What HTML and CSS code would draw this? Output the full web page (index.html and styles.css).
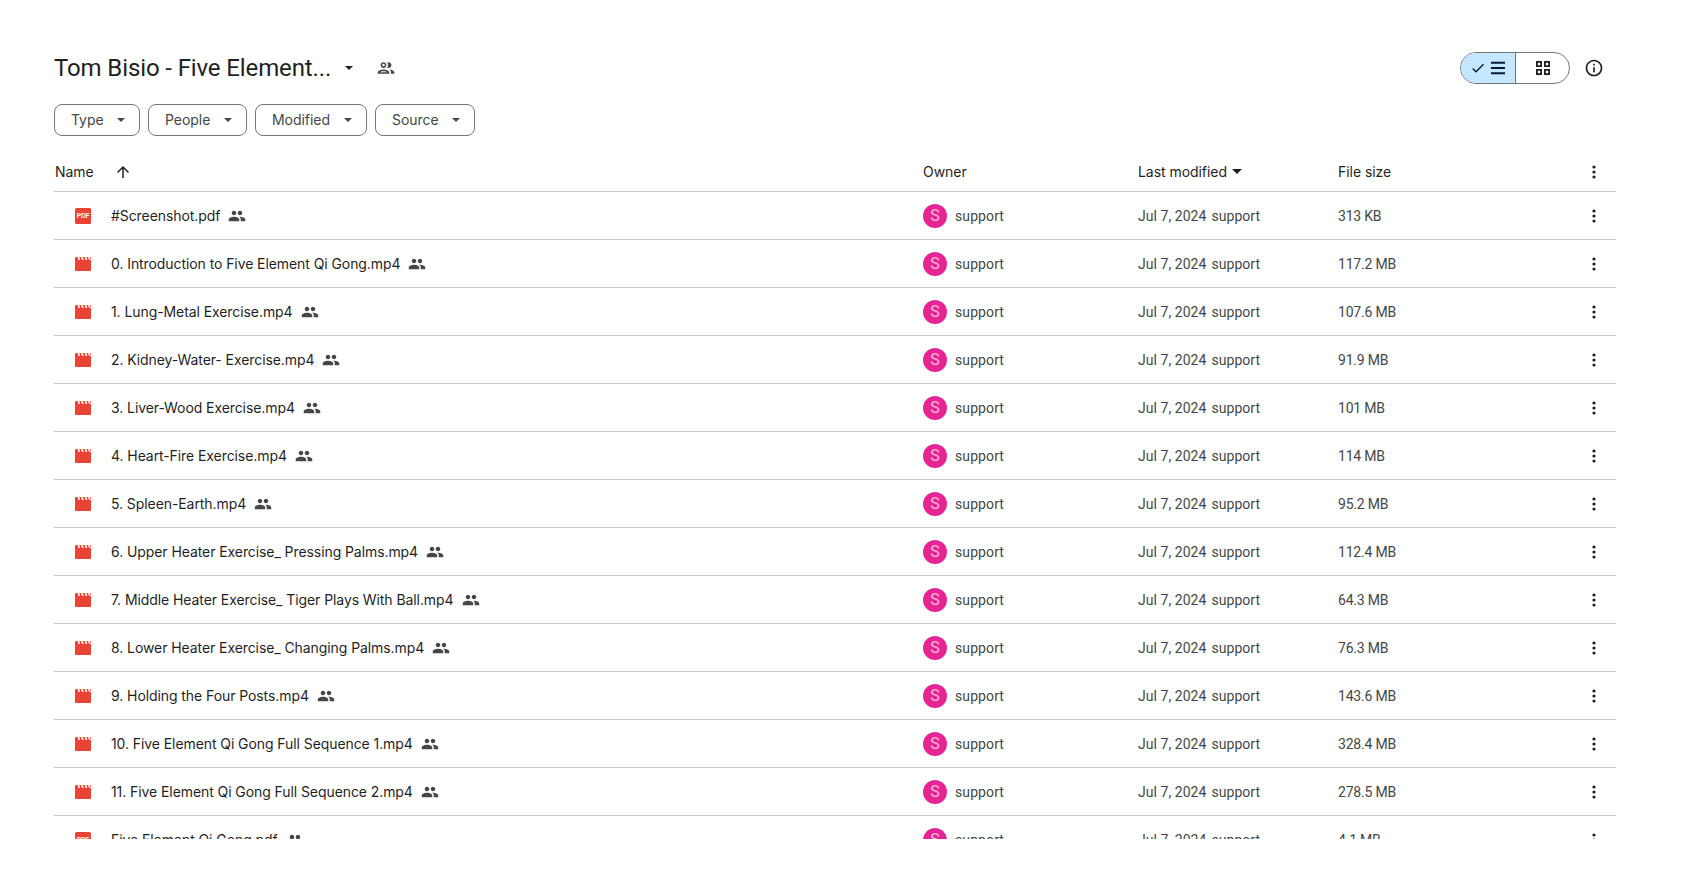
FILE: index.html
```html
<!DOCTYPE html>
<html lang="en">
<head>
<meta charset="utf-8">
<title>Tom Bisio - Five Element Qi Gong</title>
<link rel="stylesheet" href="styles.css">
</head>
<body>
<svg class="defs" width="0" height="0" aria-hidden="true">
  <symbol id="i-people" viewBox="0 0 24 24"><path d="M16 11c1.66 0 2.99-1.34 2.99-3S17.66 5 16 5c-1.66 0-3 1.34-3 3s1.34 3 3 3zm-8 0c1.66 0 2.99-1.34 2.99-3S9.66 5 8 5C6.34 5 5 6.34 5 8s1.34 3 3 3zm0 2c-2.33 0-7 1.17-7 3.5V19h14v-2.5c0-2.33-4.67-3.5-7-3.5zm8 0c-.29 0-.62.02-.97.05 1.16.84 1.97 1.97 1.97 3.45V19h6v-2.5c0-2.33-4.67-3.5-7-3.5z"/></symbol>
  <symbol id="i-more" viewBox="0 0 16 16"><circle cx="8" cy="3" r="1.600"/><circle cx="8" cy="8" r="1.600"/><circle cx="8" cy="13" r="1.600"/></symbol>
  <symbol id="i-video" viewBox="0 0 16 16"><path fill-rule="evenodd" d="M1 1h14a1 1 0 0 1 1 1V14a1 1 0 0 1-1 1H1a1 1 0 0 1-1-1V2a1 1 0 0 1 1-1zM2.400 1l1.100 3h1.700L4.100 1zM6 1l1.100 3h1.700L7.700 1zM9.600 1l1.100 3h1.700l-1.100-3zM13 1l1.100 3h1.700L14.700 1z"/></symbol>
  <symbol id="i-caret" viewBox="0 0 10 5"><path d="M0 0h10L5 5z"/></symbol>
</svg>
<main class="page">
  <header class="top">
    <div class="crumb">
      <h1 class="title">Tom Bisio - Five Element...</h1>
      <svg class="title-caret"><use href="#i-caret"/></svg>
      <svg class="title-people" viewBox="0 0 24 24"><path d="M9 13.750c-2.340 0-7 1.170-7 3.500V19h14v-1.750c0-2.330-4.660-3.500-7-3.500zM4.340 17c.84-.58 2.870-1.250 4.660-1.250s3.820.67 4.660 1.250H4.340zM9 12c1.930 0 3.500-1.570 3.500-3.500S10.930 5 9 5 5.500 6.570 5.500 8.500 7.070 12 9 12zm0-5c.83 0 1.500.67 1.500 1.500S9.830 10 9 10s-1.500-.67-1.500-1.500S8.170 7 9 7zm7.040 6.810c1.160.84 1.960 1.960 1.960 3.440V19h4v-1.750c0-2.020-3.500-3.170-5.960-3.440zM15 12c1.930 0 3.500-1.570 3.500-3.500S16.930 5 15 5c-.54 0-1.040.13-1.500.35.63.89 1 1.980 1 3.150s-.37 2.260-1 3.150c.46.22.96.35 1.500.35z"/></svg>
    </div>
    <div class="view-tools">
      <div class="toggle">
        <span class="seg seg-on">
          <svg class="seg-check" viewBox="0 0 24 24"><path d="M9 16.170 4.830 12l-1.420 1.410L9 19 21 7l-1.410-1.410z"/></svg>
          <svg class="seg-icon" viewBox="0 0 18 18"><path d="M2 2.800h14v2H2zM2 8h14v2H2zM2 13.200h14v2H2z"/></svg>
        </span>
        <span class="seg">
          <svg class="seg-icon" viewBox="0 0 18 18"><path d="M2 2h6v6H2zM3.800 3.800v2.400h2.400V3.800zM10 2h6v6h-6zM11.800 3.800v2.400h2.400V3.800zM2 10h6v6H2zM3.800 11.800v2.400h2.400v-2.400zM10 10h6v6h-6zM11.800 11.800v2.400h2.400v-2.400z" fill-rule="evenodd"/></svg>
        </span>
      </div>
      <svg class="info" viewBox="0 0 24 24"><path d="M11 7h2v2h-2zm0 4h2v6h-2zm1-9C6.480 2 2 6.480 2 12s4.480 10 10 10 10-4.480 10-10S17.520 2 12 2zm0 18c-4.410 0-8-3.590-8-8s3.590-8 8-8 8 3.590 8 8-3.590 8-8 8z"/></svg>
    </div>
  </header>

  <div class="chips">
    <button class="chip">Type<svg class="chip-caret"><use href="#i-caret"/></svg></button>
    <button class="chip">People<svg class="chip-caret"><use href="#i-caret"/></svg></button>
    <button class="chip">Modified<svg class="chip-caret"><use href="#i-caret"/></svg></button>
    <button class="chip">Source<svg class="chip-caret"><use href="#i-caret"/></svg></button>
  </div>

  <div class="list-head row-grid">
    <div class="head-name">Name
      <svg class="arrow" viewBox="0 0 24 24"><path d="M4 12l1.410 1.410L11 7.830V20h2V7.830l5.580 5.590L20 12l-8-8z"/></svg>
    </div>
    <div>Owner</div>
    <div class="head-mod">Last modified<svg class="head-caret"><use href="#i-caret"/></svg></div>
    <div>File size</div>
    <svg class="more"><use href="#i-more"/></svg>
  </div>

  <div class="list">
    <div class="row row-grid"><div class="name"><svg class="ftype" viewBox="0 0 16 16"><rect width="16" height="16" rx="1.500"/><text x="8" y="10.300" class="pdf-label">PDF</text></svg><span>#Screenshot.pdf</span><svg class="shared"><use href="#i-people"/></svg></div><div class="owner"><span class="avatar">S</span>support</div><div class="mod"><span>Jul 7, 2024</span><span>support</span></div><div class="size">313 KB</div><svg class="more"><use href="#i-more"/></svg></div>
    <div class="row row-grid"><div class="name"><svg class="ftype"><use href="#i-video"/></svg><span>0. Introduction to Five Element Qi Gong.mp4</span><svg class="shared"><use href="#i-people"/></svg></div><div class="owner"><span class="avatar">S</span>support</div><div class="mod"><span>Jul 7, 2024</span><span>support</span></div><div class="size">117.2 MB</div><svg class="more"><use href="#i-more"/></svg></div>
    <div class="row row-grid"><div class="name"><svg class="ftype"><use href="#i-video"/></svg><span>1. Lung-Metal Exercise.mp4</span><svg class="shared"><use href="#i-people"/></svg></div><div class="owner"><span class="avatar">S</span>support</div><div class="mod"><span>Jul 7, 2024</span><span>support</span></div><div class="size">107.6 MB</div><svg class="more"><use href="#i-more"/></svg></div>
    <div class="row row-grid"><div class="name"><svg class="ftype"><use href="#i-video"/></svg><span>2. Kidney-Water- Exercise.mp4</span><svg class="shared"><use href="#i-people"/></svg></div><div class="owner"><span class="avatar">S</span>support</div><div class="mod"><span>Jul 7, 2024</span><span>support</span></div><div class="size">91.9 MB</div><svg class="more"><use href="#i-more"/></svg></div>
    <div class="row row-grid"><div class="name"><svg class="ftype"><use href="#i-video"/></svg><span>3. Liver-Wood Exercise.mp4</span><svg class="shared"><use href="#i-people"/></svg></div><div class="owner"><span class="avatar">S</span>support</div><div class="mod"><span>Jul 7, 2024</span><span>support</span></div><div class="size">101 MB</div><svg class="more"><use href="#i-more"/></svg></div>
    <div class="row row-grid"><div class="name"><svg class="ftype"><use href="#i-video"/></svg><span>4. Heart-Fire Exercise.mp4</span><svg class="shared"><use href="#i-people"/></svg></div><div class="owner"><span class="avatar">S</span>support</div><div class="mod"><span>Jul 7, 2024</span><span>support</span></div><div class="size">114 MB</div><svg class="more"><use href="#i-more"/></svg></div>
    <div class="row row-grid"><div class="name"><svg class="ftype"><use href="#i-video"/></svg><span>5. Spleen-Earth.mp4</span><svg class="shared"><use href="#i-people"/></svg></div><div class="owner"><span class="avatar">S</span>support</div><div class="mod"><span>Jul 7, 2024</span><span>support</span></div><div class="size">95.2 MB</div><svg class="more"><use href="#i-more"/></svg></div>
    <div class="row row-grid"><div class="name"><svg class="ftype"><use href="#i-video"/></svg><span>6. Upper Heater Exercise_ Pressing Palms.mp4</span><svg class="shared"><use href="#i-people"/></svg></div><div class="owner"><span class="avatar">S</span>support</div><div class="mod"><span>Jul 7, 2024</span><span>support</span></div><div class="size">112.4 MB</div><svg class="more"><use href="#i-more"/></svg></div>
    <div class="row row-grid"><div class="name"><svg class="ftype"><use href="#i-video"/></svg><span>7. Middle Heater Exercise_ Tiger Plays With Ball.mp4</span><svg class="shared"><use href="#i-people"/></svg></div><div class="owner"><span class="avatar">S</span>support</div><div class="mod"><span>Jul 7, 2024</span><span>support</span></div><div class="size">64.3 MB</div><svg class="more"><use href="#i-more"/></svg></div>
    <div class="row row-grid"><div class="name"><svg class="ftype"><use href="#i-video"/></svg><span>8. Lower Heater Exercise_ Changing Palms.mp4</span><svg class="shared"><use href="#i-people"/></svg></div><div class="owner"><span class="avatar">S</span>support</div><div class="mod"><span>Jul 7, 2024</span><span>support</span></div><div class="size">76.3 MB</div><svg class="more"><use href="#i-more"/></svg></div>
    <div class="row row-grid"><div class="name"><svg class="ftype"><use href="#i-video"/></svg><span>9. Holding the Four Posts.mp4</span><svg class="shared"><use href="#i-people"/></svg></div><div class="owner"><span class="avatar">S</span>support</div><div class="mod"><span>Jul 7, 2024</span><span>support</span></div><div class="size">143.6 MB</div><svg class="more"><use href="#i-more"/></svg></div>
    <div class="row row-grid"><div class="name"><svg class="ftype"><use href="#i-video"/></svg><span>10. Five Element Qi Gong Full Sequence 1.mp4</span><svg class="shared"><use href="#i-people"/></svg></div><div class="owner"><span class="avatar">S</span>support</div><div class="mod"><span>Jul 7, 2024</span><span>support</span></div><div class="size">328.4 MB</div><svg class="more"><use href="#i-more"/></svg></div>
    <div class="row row-grid"><div class="name"><svg class="ftype"><use href="#i-video"/></svg><span>11. Five Element Qi Gong Full Sequence 2.mp4</span><svg class="shared"><use href="#i-people"/></svg></div><div class="owner"><span class="avatar">S</span>support</div><div class="mod"><span>Jul 7, 2024</span><span>support</span></div><div class="size">278.5 MB</div><svg class="more"><use href="#i-more"/></svg></div>
    <div class="row row-grid"><div class="name"><svg class="ftype" viewBox="0 0 16 16"><rect width="16" height="16" rx="1.500"/><text x="8" y="10.300" class="pdf-label">PDF</text></svg><span>Five Element Qi Gong.pdf</span><svg class="shared"><use href="#i-people"/></svg></div><div class="owner"><span class="avatar">S</span>support</div><div class="mod"><span>Jul 7, 2024</span><span>support</span></div><div class="size">4.1 MB</div><svg class="more"><use href="#i-more"/></svg></div>
  </div>
</main>
</body>
</html>
```

FILE: styles.css
```css
* { box-sizing: border-box; }
html, body { margin: 0; background: #fff; }
body {
  height: 888px;
  overflow: hidden;
  font-family: Roboto, "Liberation Sans", sans-serif;
  font-size: 14px;
  color: #444746;
}
.defs { position: absolute; }
.page { padding: 52px 66px 0 54px; }

.top { display: flex; justify-content: space-between; align-items: center; height: 32px; }
.crumb { display: flex; align-items: center; }
.title { margin: 0; font-size: 24px; font-weight: 400; color: #1f1f1f; line-height: 32px; letter-spacing: -.12px; }
.title-caret { width: 8px; height: 4px; margin-left: 14px; fill: #1f1f1f; }
.title-people { width: 20px; height: 20px; margin-left: 23px; fill: #444746; }

.view-tools { display: flex; align-items: center; gap: 14px; margin-right: 12px; }
.toggle { display: flex; width: 110px; height: 32px; border: 1px solid #747775; border-radius: 16px; overflow: hidden; }
.seg { flex: 1; display: flex; align-items: center; justify-content: center; gap: 3px; }
.seg-on { flex: 0 0 55px; background: #c2e7ff; border-right: 1px solid #747775; }
.seg-check { width: 16px; height: 16px; fill: #001d35; }
.seg-icon { width: 18px; height: 18px; fill: #001d35; }
.seg:not(.seg-on) .seg-icon { fill: #1f1f1f; }
.info { width: 20px; height: 20px; fill: #1f1f1f; }

.chips { display: flex; gap: 8px; margin-top: 20px; }
.chip {
  display: flex; align-items: center; justify-content: space-between;
  height: 32px; padding: 0 14px 1px 16px;
  background: #fff; border: 1px solid #747775; border-radius: 8px;
  font: 400 14px Inter, Roboto, sans-serif; letter-spacing: -.05px; color: #444746;
}
.chip:nth-child(1) { width: 86px; }
.chip:nth-child(2) { width: 99px; }
.chip:nth-child(3) { width: 112px; }
.chip:nth-child(4) { width: 100px; }
.chip-caret { width: 8px; height: 4px; fill: #444746; }

.row-grid { display: grid; grid-template-columns: 869px 215px 200px 1fr 16px; align-items: center; }
.list-head { height: 48px; margin-top: 8px; padding-top: 8px; border-bottom: 1px solid #c7c7c7; color: #1f1f1f; font: 400 14px Inter, Roboto, sans-serif; letter-spacing: -.05px; padding-right: 14px; }
.head-name { display: flex; align-items: center; padding-left: 1px; }
.arrow { width: 18px; height: 18px; margin-left: 20px; fill: #1f1f1f; }
.head-mod { display: flex; align-items: center; }
.head-caret { width: 10px; height: 5px; margin-left: 5px; fill: #1f1f1f; }

.list { height: 647px; overflow: hidden; }
.row { height: 48px; border-bottom: 1px solid #c7c7c7; padding-right: 14px; }
.name { display: flex; align-items: center; padding-left: 21px; color: #1f1f1f; font-family: Inter, Roboto, sans-serif; letter-spacing: -.08px; }
.ftype { width: 16px; height: 16px; margin-right: 20px; fill: #ea4335; flex: none; }
.pdf-label { font: 700 6.300px "Liberation Sans", sans-serif; fill: #fff; text-anchor: middle; }
.shared { width: 18px; height: 18px; margin-left: 8px; fill: #444746; }
.owner { display: flex; align-items: center; gap: 8px; letter-spacing: .1px; }
.avatar {
  width: 24px; height: 24px; border-radius: 50%;
  display: flex; align-items: center; justify-content: center;
  background: #e52592; color: #fbd; font-size: 16px;
}
.mod { display: flex; gap: 5px; letter-spacing: .05px; }
.size { letter-spacing: -.2px; }
.more { width: 16px; height: 16px; fill: #1f1f1f; }
```
